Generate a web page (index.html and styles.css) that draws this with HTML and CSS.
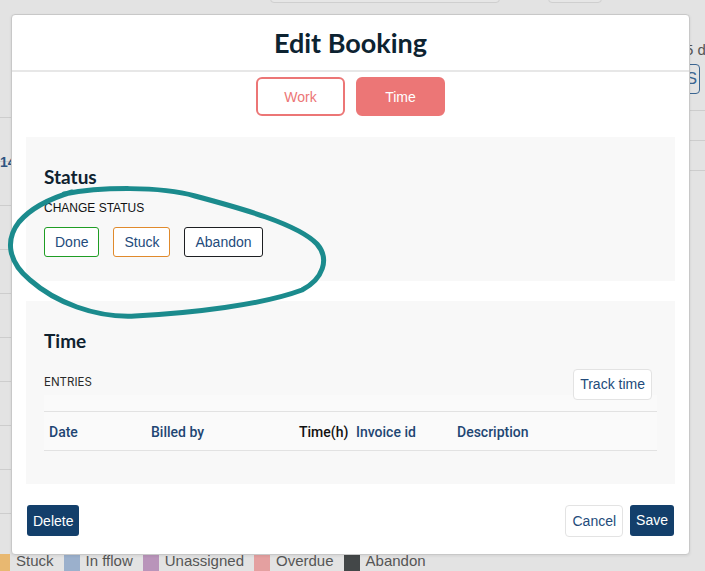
FILE: index.html
```html
<!DOCTYPE html>
<html lang="en">
<head>
    <meta charset="UTF-8">
    <meta name="viewport" content="width=device-width, initial-scale=1.0">
    <title>Edit Booking</title>
    <link rel="stylesheet" href="styles.css">
</head>
<body>
    <!-- page behind the dialog -->
    <div class="backdrop">
        <div class="toolbar">
            <div class="toolbar-input wide"></div>
            <div class="toolbar-input small"></div>
        </div>

        <div class="board">
            <div class="board-left">
                <div class="board-row first"></div>
                <div class="board-row"><span class="row-num">14</span></div>
                <div class="board-row"></div>
                <div class="board-row"></div>
                <div class="board-row"></div>
                <div class="board-row"></div>
                <div class="board-row"></div>
                <div class="board-row"></div>
                <div class="board-row"></div>
                <div class="board-row"></div>
            </div>
            <div class="board-right">
                <div class="days">5 d</div>
                <div class="mini-btn">S</div>
                <div class="side-row"></div>
                <div class="side-row"></div>
                <div class="side-row"></div>
            </div>
        </div>

        <div class="legend">
            <span class="swatch stuck"></span><span class="legend-label">Stuck</span>
            <span class="swatch inflow"></span><span class="legend-label">In fflow</span>
            <span class="swatch unassigned"></span><span class="legend-label">Unassigned</span>
            <span class="swatch overdue"></span><span class="legend-label">Overdue</span>
            <span class="swatch abandon"></span><span class="legend-label">Abandon</span>
        </div>
    </div>

    <div class="modal">
        <div class="modal-header">
            <h2>Edit Booking</h2>
        </div>

        <div class="tabs">
            <button class="tab">Work</button>
            <button class="tab active">Time</button>
        </div>

        <div class="section status-section">
            <h3>Status</h3>
            <div class="label">CHANGE STATUS</div>
            <div class="status-buttons">
                <button class="status-btn done">Done</button>
                <button class="status-btn stuck">Stuck</button>
                <button class="status-btn abandon">Abandon</button>
            </div>
        </div>

        <div class="section time-section">
            <h3>Time</h3>
            <div class="entries-bar">
                <span class="entries-label">ENTRIES</span>
                <button class="light-btn track-btn">Track time</button>
            </div>
            <div class="entries-table">
                <div class="entries-head">
                    <div>Date</div>
                    <div>Billed by</div>
                    <div class="dark">Time(h)</div>
                    <div>Invoice id</div>
                    <div>Description</div>
                </div>
            </div>
        </div>

        <div class="modal-footer">
            <button class="dark-btn">Delete</button>
            <div class="footer-right">
                <button class="light-btn">Cancel</button>
                <button class="dark-btn">Save</button>
            </div>
        </div>
    </div>

    <!-- hand drawn marker round the status buttons -->
    <svg class="scribble" width="705" height="571" viewBox="0 0 705 571">
        <path d="M 64 194 C 100 187, 160 186, 195 196 C 240 208, 298 224, 317 244 C 330 259, 323 279, 302 290 C 262 305, 192 313, 135 316 C 95 318, 55 302, 30 280 C 8 262, 5 240, 19 222 C 31 208, 48 199, 72 192"
              fill="none" stroke="#1b8b8d" stroke-width="5" stroke-linecap="round"/>
    </svg>
</body>
</html>
```

FILE: styles.css
```css
* {
    margin: 0;
    padding: 0;
    box-sizing: border-box;
}

body {
    font-family: "Liberation Sans", Arial, sans-serif;
    background: #e3e3e3;
    width: 705px;
    height: 571px;
    overflow: hidden;
    position: relative;
}

button {
    font-family: "Liberation Sans", Arial, sans-serif;
    font-size: 14px;
    cursor: pointer;
    background: none;
}

/* ---------- backdrop page ---------- */

.backdrop {
    height: 571px;
    display: flex;
    flex-direction: column;
}

.toolbar {
    display: flex;
    gap: 48px;
    padding-left: 270px;
    margin-top: -20px;
}

.toolbar-input {
    height: 23px;
    border: 1px solid #cfcfcf;
    border-radius: 4px;
    background: #e6e6e6;
}

.toolbar-input.wide {
    width: 230px;
}

.toolbar-input.small {
    width: 54px;
}

.board {
    flex: 1;
    display: flex;
    justify-content: space-between;
}

.board-left {
    width: 11px;
    padding-top: 114px;
}

.board-row {
    height: 44px;
    border-bottom: 1px solid #cdcdcd;
    position: relative;
}

.board-row.first {
    height: 1px;
}

.row-num {
    position: absolute;
    left: 0;
    top: 36px;
    font-size: 14px;
    font-weight: bold;
    color: #2f5581;
}

.board-right {
    width: 16px;
    padding-top: 38px;
    overflow: hidden;
}

.days {
    font-size: 15px;
    color: #555;
    white-space: nowrap;
    margin-left: -4px;
}

.mini-btn {
    margin-top: 6px;
    margin-left: -10px;
    width: 21px;
    height: 30px;
    border: 1.5px solid #3a6591;
    border-radius: 4px;
    font-size: 17px;
    line-height: 27px;
    text-align: right;
    padding-right: 2px;
    color: #3a6591;
    margin-bottom: 16px;
}

.side-row {
    height: 30px;
    border-top: 1px solid #cdcdcd;
}

.legend {
    height: 17px;
    margin-left: -6px;
    display: flex;
    align-items: flex-end;
    font-size: 15px;
    color: #555;
    line-height: 17px;
}

.swatch {
    width: 16px;
    height: 17px;
    margin-right: 6px;
}

.legend-label {
    margin-right: 10px;
    margin-bottom: 2px;
}

.swatch.stuck { background: #e8b871; }
.swatch.inflow { background: #9bb0cc; }
.swatch.unassigned { background: #b994ba; }
.swatch.overdue { background: #e4a0a0; }
.swatch.abandon { background: #434748; }

/* ---------- modal ---------- */

.modal {
    position: absolute;
    left: 11px;
    top: 14px;
    width: 679px;
    background: #fff;
    border: 1px solid #c8c8c8;
    border-radius: 4px;
    box-shadow: 0 1px 3px rgba(0, 0, 0, 0.08);
}

.modal-header {
    padding: 12px 0 11px;
    border-bottom: 2px solid #e7e7e7;
    text-align: center;
}

.modal-header h2 {
    font-family: Lato, "Open Sans", sans-serif;
    font-weight: 700;
    font-size: 27px;
    line-height: 1.2;
    color: #0d2331;
}

.tabs {
    display: flex;
    justify-content: center;
    gap: 11px;
    margin-top: 5px;
}

.tab {
    width: 89px;
    height: 39px;
    border: 2px solid #ec7676;
    border-radius: 6px;
    color: #ec7676;
    background: #fff;
}

.tab.active {
    background: #ec7676;
    color: #fff;
}

.section {
    margin: 0 14px;
    background: #f8f8f8;
    padding: 29px 18px 24px;
}

.section h3 {
    font-family: Lato, "Open Sans", sans-serif;
    font-weight: 700;
    font-size: 19px;
    line-height: 1.2;
    color: #0f2230;
}

.status-section {
    margin-top: 21px;
}

.label {
    margin-top: 12px;
    font-size: 12px;
    line-height: 14px;
    color: #111;
}

.status-buttons {
    display: flex;
    gap: 14px;
    margin-top: 12px;
}

.status-btn {
    height: 30px;
    padding: 0 10px;
    border: 1px solid #222;
    border-radius: 3px;
    color: #234b7b;
    background: #fff;
}

.status-btn.done {
    border-color: #1f9d24;
}

.status-btn.stuck {
    border-color: #e08a2c;
}

.status-btn.abandon {
    border-color: #1d1f22;
}

.time-section {
    margin-top: 20px;
    padding-bottom: 33px;
}

.entries-bar {
    display: flex;
    justify-content: space-between;
    align-items: center;
    margin-top: 16px;
    padding-right: 5px;
}

.entries-label {
    font-family: Inter, "Liberation Sans", sans-serif;
    font-size: 11.5px;
    color: #2a2a2a;
    margin-top: -4px;
}

.light-btn {
    height: 32px;
    padding: 0 6px;
    border: 1px solid #e3e3e3;
    border-radius: 4px;
    background: #fff;
    color: #234b7b;
}

.track-btn {
    height: 31px;
}

.entries-table {
    margin-top: -5px;
    padding-top: 16px;
    background: #fafafa;
}

.entries-head {
    display: grid;
    grid-template-columns: 102px 148px 57px 101px 1fr;
    border-top: 1px solid #e2e2e2;
    border-bottom: 1px solid #e2e2e2;
    padding: 12px 0 9px;
    font-family: Roboto, "Liberation Sans", sans-serif;
    font-weight: 500;
    font-size: 14px;
    line-height: 17px;
    color: #1f4673;
}

.entries-head div {
    padding-left: 5px;
    white-space: nowrap;
}

.entries-head .dark {
    color: #111;
}

.modal-footer {
    display: flex;
    justify-content: space-between;
    align-items: center;
    margin-top: 21px;
    padding: 0 15px 17px;
}

.footer-right {
    display: flex;
    gap: 7px;
}

.dark-btn {
    height: 31px;
    padding: 0 6px;
    border: none;
    border-radius: 3px;
    background: #133f6b;
    color: #fff;
}

/* ---------- annotation ---------- */

.scribble {
    position: absolute;
    left: 0;
    top: 0;
    pointer-events: none;
}
```
